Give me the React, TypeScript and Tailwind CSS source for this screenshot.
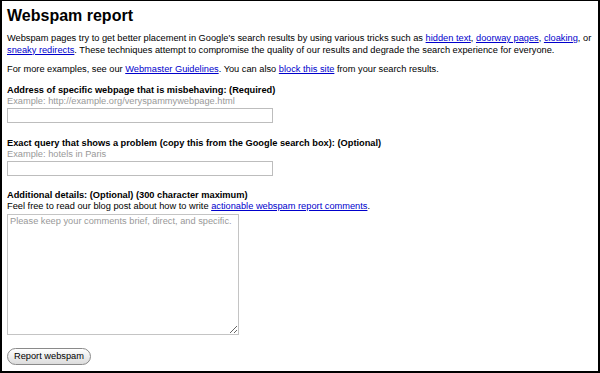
import React from "react";

const link = "text-[#0000cc] underline";
const font = { fontFamily: '"Liberation Sans", Arial, Helvetica, sans-serif' };

export default function App() {
  return (
    <div
      className="h-[373px] w-[600px] border-x-2 border-t border-b-2 border-black bg-white pl-[5px] pt-[5px] text-[9.25px] leading-[11.5px] text-black"
      style={font}
    >
      <h1 className="text-[16px] font-bold leading-[20px]">Webspam report</h1>
      <p className="mt-[7px]">
        Webspam pages try to get better placement in Google's search results by using various tricks such as{" "}
        <a className={link} href="#">hidden text</a>, <a className={link} href="#">doorway pages</a>,{" "}
        <a className={link} href="#">cloaking</a>, or <a className={link} href="#">sneaky redirects</a>. These
        techniques attempt to compromise the quality of our results and degrade the search experience for everyone.
      </p>
      <p className="mt-[8px]">
        For more examples, see our <a className={link} href="#">Webmaster Guidelines</a>. You can also{" "}
        <a className={link} href="#">block this site</a> from your search results.
      </p>

      <div className="mt-[9px] font-bold">Address of specific webpage that is misbehaving: (Required)</div>
      <div className="text-[#999999]">Example: http://example.org/veryspammywebpage.html</div>
      <div className="h-[15px] w-[266px] border border-[#bdbdbd] bg-white" />

      <div className="mt-[15px] font-bold">
        Exact query that shows a problem (copy this from the Google search box): (Optional)
      </div>
      <div className="text-[#999999]">Example: hotels in Paris</div>
      <div className="h-[15px] w-[266px] border border-[#bdbdbd] bg-white" />

      <div className="mt-[14px] font-bold">Additional details: (Optional) (300 character maximum)</div>
      <div>
        Feel free to read our blog post about how to write{" "}
        <a className={link} href="#">actionable webspam report comments</a>.
      </div>
      <textarea
        className="mt-[1px] block h-[121px] w-[232px] resize border border-[#c4c4c4] px-[2px] py-[1px] text-[9.25px] leading-[11px] outline-none placeholder:text-[#999999]"
        style={font}
        placeholder="Please keep your comments brief, direct, and specific."
      />
      <button
        className="mt-[13px] block h-[17px] rounded-full border border-[#8a8a8a] bg-gradient-to-b from-white to-[#dcdcdc] px-[6px] text-[9.25px] leading-[14px] text-black"
        style={font}
      >
        Report webspam
      </button>
    </div>
  );
}
